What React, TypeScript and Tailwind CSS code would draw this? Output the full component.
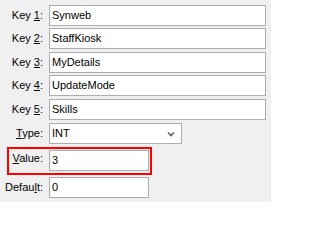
import React from 'react';

const Label = ({ pre, u, post, width = 'w-[45px]' }: { pre: string; u: string; post: string; width?: string }) => (
  <div className={`${width} shrink-0 pr-[2px] text-right`}>
    {pre}
    <span className="underline underline-offset-[1px]">{u}</span>
    {post}
  </div>
);

const Box = ({ value, width = 'w-[217px]' }: { value: string; width?: string }) => (
  <div className={`${width} h-[21px] ml-[4px] flex items-center border border-[#abadb3] bg-white pl-[2px]`}>
    {value}
  </div>
);

const App = () => {
  const keys = [
    { n: '1', v: 'Synweb', mt: 'mt-[5px]' },
    { n: '2', v: 'StaffKiosk', mt: 'mt-[2px]' },
    { n: '3', v: 'MyDetails', mt: 'mt-[3px]' },
    { n: '4', v: 'UpdateMode', mt: 'mt-[2px]' },
    { n: '5', v: 'Skills', mt: 'mt-[3px]' },
  ];

  return (
    <div
      className="w-[271px] h-[202px] bg-[#f0f0f0] text-[11px] text-black overflow-hidden flex flex-col"
      style={{ fontFamily: '"Liberation Sans", Arial, sans-serif' }}
    >
      {keys.map((k) => (
        <div key={k.n} className={`${k.mt} flex items-center`}>
          <Label pre="Key " u={k.n} post=":" />
          <Box value={k.v} />
        </div>
      ))}

      {/* Type dropdown */}
      <div className="mt-[3px] flex items-center">
        <Label pre="" u="T" post="ype:" />
        <div className="w-[133px] h-[21px] ml-[4px] flex items-center justify-between border border-[#abadb3] bg-white pl-[2px] pr-[6px]">
          <span>INT</span>
          <svg width="8" height="6" viewBox="0 0 8 6">
            <polyline points="1,1.5 4,4.5 7,1.5" fill="none" stroke="#606060" strokeWidth="1.6" />
          </svg>
        </div>
      </div>

      {/* Value, highlighted */}
      <div className="mt-[3px] ml-[7px] w-[145px] h-[28px] border-2 border-[#ff0000] flex items-start pt-[1px]">
        <Label pre="" u="V" post="alue:" width="w-[36px]" />
        <Box value="3" width="w-[100px]" />
      </div>

      <div className="mt-[2px] flex items-center">
        <Label pre="Defau" u="l" post="t:" />
        <Box value="0" width="w-[100px]" />
      </div>
    </div>
  );
};

export default App;
